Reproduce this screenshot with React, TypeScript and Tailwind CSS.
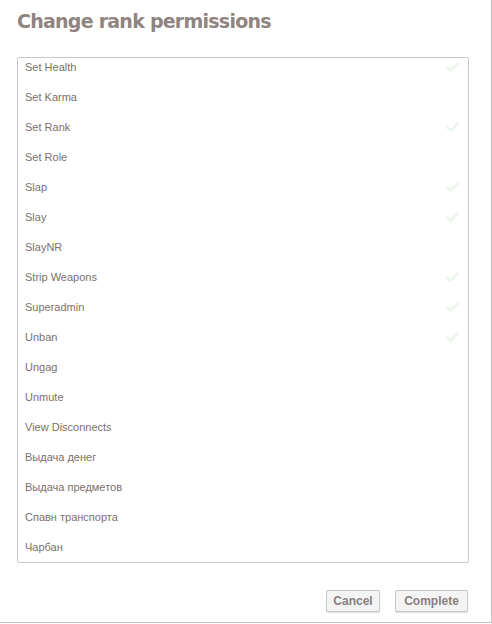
import { Check } from "lucide-react";

const permissions = [
  { name: "Set Health", on: true },
  { name: "Set Karma", on: false },
  { name: "Set Rank", on: true },
  { name: "Set Role", on: false },
  { name: "Slap", on: true },
  { name: "Slay", on: true },
  { name: "SlayNR", on: false },
  { name: "Strip Weapons", on: true },
  { name: "Superadmin", on: true },
  { name: "Unban", on: true },
  { name: "Ungag", on: false },
  { name: "Unmute", on: false },
  { name: "View Disconnects", on: false },
  { name: "Выдача денег", on: false },
  { name: "Выдача предметов", on: false },
  { name: "Спавн транспорта", on: false },
  { name: "Чарбан", on: false },
];

export default function App() {
  return (
    <div className="w-[492px] h-[624px] bg-white overflow-hidden">
      <div className="w-[492px] h-[623px] border-r border-b border-[#c4c4c4] bg-white flex flex-col">
        <h1 className="pl-[17px] pt-[7px] h-[57px] text-[19px] font-bold text-[#8f8480] leading-[28px] font-['DejaVu_Sans',sans-serif] tracking-[-0.75px]">
          Change rank permissions
        </h1>

        <div className="ml-[17px] w-[452px] h-[506px] border border-[#c8c8c8] rounded-[2px] overflow-hidden">
          {permissions.map((p) => (
            <div key={p.name} className="h-[30px] flex items-start justify-between pl-[7px] pr-[8px]">
              <span className="text-[11px] leading-[18px] text-[#7b6f6c] font-['Liberation_Sans',sans-serif]">
                {p.name}
              </span>
              {p.on && <Check className="mt-[2px] w-[15px] h-[15px] text-[#ecf5ec]" strokeWidth={4.5} />}
            </div>
          ))}
        </div>

        <div className="flex justify-end gap-[15px] pr-[23px] pt-[27px]">
          <button className="h-[22px] w-[54px] border border-[#c6c6c6] rounded-[2px] bg-[#f4f4f4] shadow-[0_1px_1px_rgba(0,0,0,0.12)] text-[12px] font-bold text-[#8a7f7c] font-['Liberation_Sans',sans-serif]">
            Cancel
          </button>
          <button className="h-[22px] w-[73px] border border-[#c6c6c6] rounded-[2px] bg-[#f4f4f4] shadow-[0_1px_1px_rgba(0,0,0,0.12)] text-[12px] font-bold text-[#8a7f7c] font-['Liberation_Sans',sans-serif]">
            Complete
          </button>
        </div>
      </div>
    </div>
  );
}
